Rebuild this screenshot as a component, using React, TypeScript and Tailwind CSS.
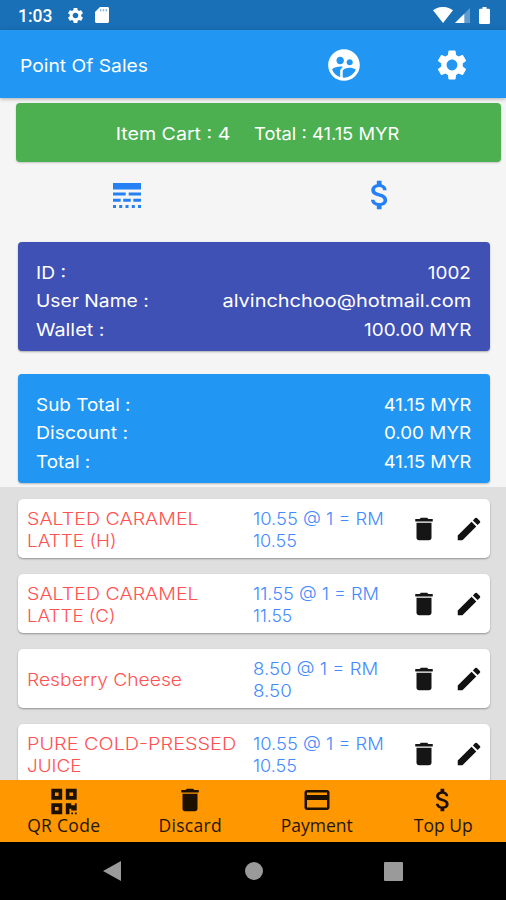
import React from 'react';
import { MdAttachMoney, MdDelete, MdEdit, MdPayment, MdSettings, MdSupervisedUserCircle } from 'react-icons/md';
import { FaQrcode } from 'react-icons/fa';

const StatusBar: React.FC = () => (
  <div className="h-[30px] shrink-0 bg-[#1a70b7] text-white flex items-center justify-between pl-[18px] pr-4">
    <div className="flex items-center">
      <span className="w-12 font-['Roboto',sans-serif] text-[17.5px] leading-[30px] font-medium pt-[2px]">1:03</span>
      <MdSettings className="w-[19px] h-[19px] mt-[1px]" />
      <svg className="w-[14px] h-4 ml-[10px]" viewBox="0 0 14 16" fill="currentColor">
        <path d="M5 0h7.6Q14 0 14 1.4v13.2Q14 16 12.6 16H1.4Q0 16 0 14.6V5z" />
        <path d="M5 2h1.4v2.6H5zM7.8 2h1.4v2.6H7.8zM10.6 2H12v2.6h-1.4z" fill="#8dbbe0" />
      </svg>
    </div>
    <div className="flex items-center">
      <svg className="w-5 h-4" viewBox="0 0 20 16" fill="currentColor">
        <path d="M0 3.2C5.5-1.1 14.5-1.1 20 3.2L10 16z" />
      </svg>
      <svg className="w-[15px] h-[15px] ml-[2px]" viewBox="0 0 15 15" fill="currentColor">
        <path d="M0 15 15 0v15z" opacity="0.3" />
        <path d="M0 15 9.3 5.7V15z" />
      </svg>
      <svg className="w-[11px] h-[17px] ml-[9px]" viewBox="0 0 11 17" fill="currentColor">
        <path d="M3.5 0h4v1.7h2.2Q11 1.7 11 3v12.7q0 1.3-1.3 1.3H1.3Q0 17 0 15.7V3q0-1.3 1.3-1.3h2.2z" />
      </svg>
    </div>
  </div>
);

const LineStyleIcon: React.FC = () => (
  <svg className="w-[28px] h-[26px]" viewBox="0 0 28 26" fill="#2680f5">
    <path d="M0 0h28v6.5H0zM0 9.5h12.7v3H0zM15.7 9.5H28v3H15.7zM0 15.7h7.7v3H0zM10.2 15.7h7.6v3h-7.6zM20.3 15.7H28v3h-7.7z" />
    <path d="M0 22h3v3H0zM6.2 22h3v3h-3zM12.5 22h3v3h-3zM18.8 22h3v3h-3zM25 22h3v3h-3z" />
  </svg>
);

interface Row {
  label: string;
  value: string;
  labelClass: string;
  valueClass: string;
}

const userRows: Row[] = [
  { label: 'ID :', value: '1002', labelClass: 'scale-x-[1.1]', valueClass: 'scale-x-[1.08]' },
  { label: 'User Name :', value: 'alvinchchoo@hotmail.com', labelClass: 'scale-x-[1.1]', valueClass: 'scale-x-[1.14]' },
  { label: 'Wallet :', value: '100.00 MYR', labelClass: 'scale-x-[1.13]', valueClass: 'scale-x-[1.08]' },
];

const totalRows: Row[] = [
  { label: 'Sub Total :', value: '41.15 MYR', labelClass: 'scale-x-[1.08]', valueClass: 'scale-x-[1.05]' },
  { label: 'Discount :', value: '0.00 MYR', labelClass: 'scale-x-[1.11]', valueClass: 'scale-x-[1.075]' },
  { label: 'Total :', value: '41.15 MYR', labelClass: 'scale-x-[1.08]', valueClass: 'scale-x-[1.05]' },
];

const InfoRows: React.FC<{ rows: Row[] }> = ({ rows }) => (
  <>
    {rows.map((row) => (
      <div key={row.label} className="flex justify-between h-[28.3px] leading-[28px]">
        <span className={`origin-left ${row.labelClass}`}>{row.label}</span>
        <span className={`origin-right ${row.valueClass}`}>{row.value}</span>
      </div>
    ))}
  </>
);

const items = [
  {
    name: [
      { text: 'SALTED CARAMEL', stretch: 'scale-x-[1.12]' },
      { text: 'LATTE (H)', stretch: 'scale-x-[1.08]' },
    ],
    price: [
      { text: '10.55 @ 1 = RM', stretch: 'scale-x-[1.05]' },
      { text: '10.55', stretch: 'scale-x-[1.03]' },
    ],
  },
  {
    name: [
      { text: 'SALTED CARAMEL', stretch: 'scale-x-[1.12]' },
      { text: 'LATTE (C)', stretch: 'scale-x-[1.07]' },
    ],
    price: [
      { text: '11.55 @ 1 = RM', stretch: 'scale-x-[1.04]' },
      { text: '11.55', stretch: 'scale-x-100' },
    ],
  },
  {
    name: [{ text: 'Resberry Cheese', stretch: 'scale-x-[1.1]' }],
    price: [
      { text: '8.50 @ 1 = RM', stretch: 'scale-x-[1.06]' },
      { text: '8.50', stretch: 'scale-x-[1.07]' },
    ],
  },
  {
    name: [
      { text: 'PURE COLD-PRESSED', stretch: 'scale-x-[1.135]' },
      { text: 'JUICE', stretch: 'scale-x-[1.08]' },
    ],
    price: [
      { text: '10.55 @ 1 = RM', stretch: 'scale-x-[1.05]' },
      { text: '10.55', stretch: 'scale-x-[1.03]' },
    ],
  },
];

const App: React.FC = () => {
  return (
    <div className="w-[506px] h-[900px] flex flex-col overflow-hidden bg-[#f5f5f5] font-['Inter',sans-serif] text-[17.5px]">
      <StatusBar />
      <header className="h-[68px] shrink-0 bg-[#2196f3] text-white flex items-center pl-5 pt-[1px] shadow-[0_1px_4px_rgba(0,0,0,0.3)]">
        <h1 className="w-[305px] origin-left scale-x-[1.1] pt-[3px]">Point Of Sales</h1>
        <MdSupervisedUserCircle className="w-[38px] h-[38px]" />
        <MdSettings className="w-9 h-9 ml-[71px]" />
      </header>

      <div className="h-[59px] shrink-0 mt-[5px] ml-4 mr-[5px] pl-1 pt-[3px] rounded bg-[#4caf50] text-white flex items-center justify-center gap-6 shadow-[0_1px_2px_rgba(0,0,0,0.2)]">
        <span className="origin-right scale-x-[1.12]">Item Cart : 4</span>
        <span className="origin-left scale-x-[1.05]">Total : 41.15 MYR</span>
      </div>

      <div className="h-[80px] shrink-0 flex">
        <div className="w-[253px] pl-[1px] pt-[21px] flex justify-center items-start">
          <LineStyleIcon />
        </div>
        <div className="w-[253px] pt-[14px] flex justify-center items-start">
          <MdAttachMoney className="w-[38px] h-[38px] text-[#2680f5]" />
        </div>
      </div>

      <section className="h-[109px] shrink-0 ml-[18px] mr-4 pt-[17px] pl-[18px] pr-[19px] rounded bg-[#3f51b5] text-white shadow-[0_1px_2px_rgba(0,0,0,0.3)]">
        <InfoRows rows={userRows} />
      </section>
      <section className="h-[109px] shrink-0 mt-[23px] ml-[18px] mr-4 pt-[17px] pl-[18px] pr-[19px] rounded bg-[#2196f3] text-white shadow-[0_1px_2px_rgba(0,0,0,0.25)]">
        <InfoRows rows={totalRows} />
      </section>

      <main className="flex-1 min-h-0 overflow-hidden mt-1 pt-3 pl-[18px] pr-4 bg-[#dfdfdf] flex flex-col gap-4">
        {items.map((item, index) => (
          <div
            key={index}
            className="h-[59px] shrink-0 rounded-[5px] bg-white flex items-center pl-[9px] leading-[22px] font-light shadow-[0_1px_2px_rgba(0,0,0,0.35)]"
          >
            <div className="w-[226px] shrink-0 text-[#ff5252] whitespace-nowrap pt-[2px]">
              {item.name.map((line) => (
                <div key={line.text} className={`origin-left ${line.stretch}`}>{line.text}</div>
              ))}
            </div>
            <div className="w-[156px] shrink-0 text-[#448aff] whitespace-nowrap pt-[2px]">
              {item.price.map((line) => (
                <div key={line.text} className={`origin-left ${line.stretch}`}>{line.text}</div>
              ))}
            </div>
            <MdDelete className="w-[30px] h-[30px] text-[#151515]" />
            <MdEdit className="w-[30px] h-[30px] ml-[15px] text-[#111111]" />
          </div>
        ))}
      </main>

      <footer className="h-[62px] shrink-0 bg-[#ff9800] text-[#241600] grid grid-cols-4 font-['Open_Sans',sans-serif] text-[17.5px]">
        <div className="flex flex-col items-center pl-[1px]">
          <div className="h-[34px] pt-[7px]">
            <FaQrcode className="w-[26px] h-[29px] text-[#1c1000]" />
          </div>
          <span className="leading-[22px] tracking-[0.3px]">QR Code</span>
        </div>
        <div className="flex flex-col items-center pl-[1px]">
          <div className="h-[34px] pt-[5px]">
            <MdDelete className="w-[30px] h-[30px] text-[#1c1000]" />
          </div>
          <span className="leading-[22px] tracking-[0.3px]">Discard</span>
        </div>
        <div className="flex flex-col items-center pl-[1px]">
          <div className="h-[34px] pt-[5px]">
            <MdPayment className="w-[30px] h-[30px] text-[#1c1000]" />
          </div>
          <span className="leading-[22px]">Payment</span>
        </div>
        <div className="flex flex-col items-center pl-[1px]">
          <div className="h-[34px] pt-[5px]">
            <MdAttachMoney className="w-[30px] h-[30px] text-[#1c1000]" />
          </div>
          <span className="leading-[22px]">Top Up</span>
        </div>
      </footer>

      <nav className="h-[58px] shrink-0 bg-black flex items-center pl-[103px]">
        <svg className="w-[18px] h-[20px]" viewBox="0 0 18 20" fill="#9a9a9a">
          <path d="M0 10 18 0v20z" />
        </svg>
        <div className="w-[18px] h-[18px] ml-[124px] rounded-full bg-[#9a9a9a]" />
        <div className="w-[19px] h-[19px] ml-[121px] rounded-[1px] bg-[#9a9a9a]" />
      </nav>
    </div>
  );
};

export default App;
